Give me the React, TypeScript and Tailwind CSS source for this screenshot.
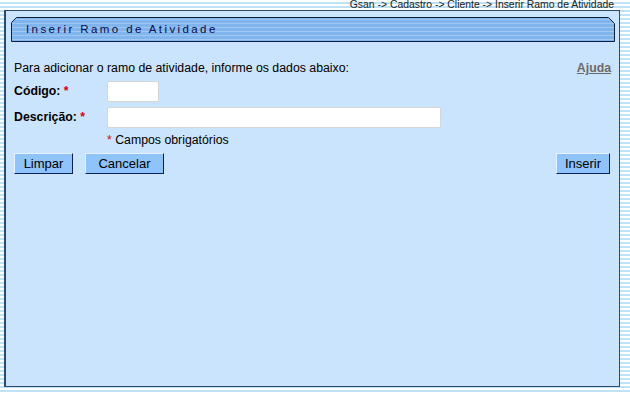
import React from 'react';

const stripes =
  'bg-[repeating-linear-gradient(to_bottom,#ffffff_0px,#ffffff_2px,#bfe3f5_2px,#bfe3f5_4px)]';

const Btn: React.FC<{ label: string; w: string }> = ({ label, w }) => (
  <button
    className={`${w} h-[21px] bg-[#8ec3fb] text-[13px] leading-none text-black border border-t-[#e6f2ff] border-l-[#e6f2ff] border-r-[#0a1f5c] border-b-[#0a1f5c]`}
  >
    {label}
  </button>
);

const App: React.FC = () => {
  return (
    <div
      className={`w-[630px] h-[393px] overflow-hidden ${stripes}`}
      style={{ fontFamily: '"Liberation Sans", Arial, sans-serif' }}
    >
      <div className="h-[10px] pr-[16px] text-right text-[10.4px] leading-[10px] text-[#222]">
        Gsan -&gt; Cadastro -&gt; Cliente -&gt; Inserir Ramo de Atividade
      </div>

      <div className="ml-[4px] w-[616px] h-[377px] bg-[#cbe4fd] border border-[#2c4a6b] border-l-2">
        {/* title bar */}
        <div className="relative ml-[5px] mt-[6px] w-[604px] h-[25px]">
          <svg className="absolute inset-0" width="604" height="25" viewBox="0 0 604 25">
            <defs>
              <pattern id="tb" width="4" height="4" patternUnits="userSpaceOnUse">
                <rect width="4" height="4" fill="#80b4ec" />
                <rect y="2" width="4" height="1" fill="#a0c8f2" />
              </pattern>
            </defs>
            <path d="M0.5 24.5 V5.5 L5.5 0.5 H597.5 L603.5 6.5 V24.5 Z" fill="url(#tb)" stroke="#0f1e3a" strokeWidth="1" />
          </svg>
          <span className="absolute left-[15px] top-[5px] text-[11.5px] leading-[14px] tracking-[2.4px] text-[#0b0b4d]">
            Inserir Ramo de Atividade
          </span>
        </div>

        <div className="pl-[8px] pr-[8px]">
          <div className="mt-[19px] flex justify-between text-[12.3px] leading-[14px] text-black">
            <span>Para adicionar o ramo de atividade, informe os dados abaixo:</span>
            <a className="font-bold underline text-[#6b6b6b]">Ajuda</a>
          </div>

          <div className="mt-[6px] flex items-center">
            <span className="w-[93px] text-[12.3px] font-bold text-black">
              Código:<span className="text-[#e00000]"> *</span>
            </span>
            <input className="w-[52px] h-[21px] bg-white border border-[#d6d6d6] rounded-[2px]" />
          </div>

          <div className="mt-[5px] flex items-center">
            <span className="w-[93px] text-[12.3px] font-bold text-black">
              Descrição:<span className="text-[#e00000]"> *</span>
            </span>
            <input className="w-[334px] h-[21px] bg-white border border-[#d6d6d6] rounded-[2px]" />
          </div>

          <div className="mt-[5px] pl-[93px] text-[12.3px] leading-[14px] text-black">
            <span className="text-[#e00000]">*</span> Campos obrigatórios
          </div>

          <div className="mt-[4px] flex items-center">
            <Btn label="Limpar" w="w-[59px]" />
            <div className="ml-[12px]">
              <Btn label="Cancelar" w="w-[79px]" />
            </div>
            <div className="ml-auto mr-[1px]">
              <Btn label="Inserir" w="w-[54px]" />
            </div>
          </div>
        </div>
      </div>
    </div>
  );
};

export default App;
